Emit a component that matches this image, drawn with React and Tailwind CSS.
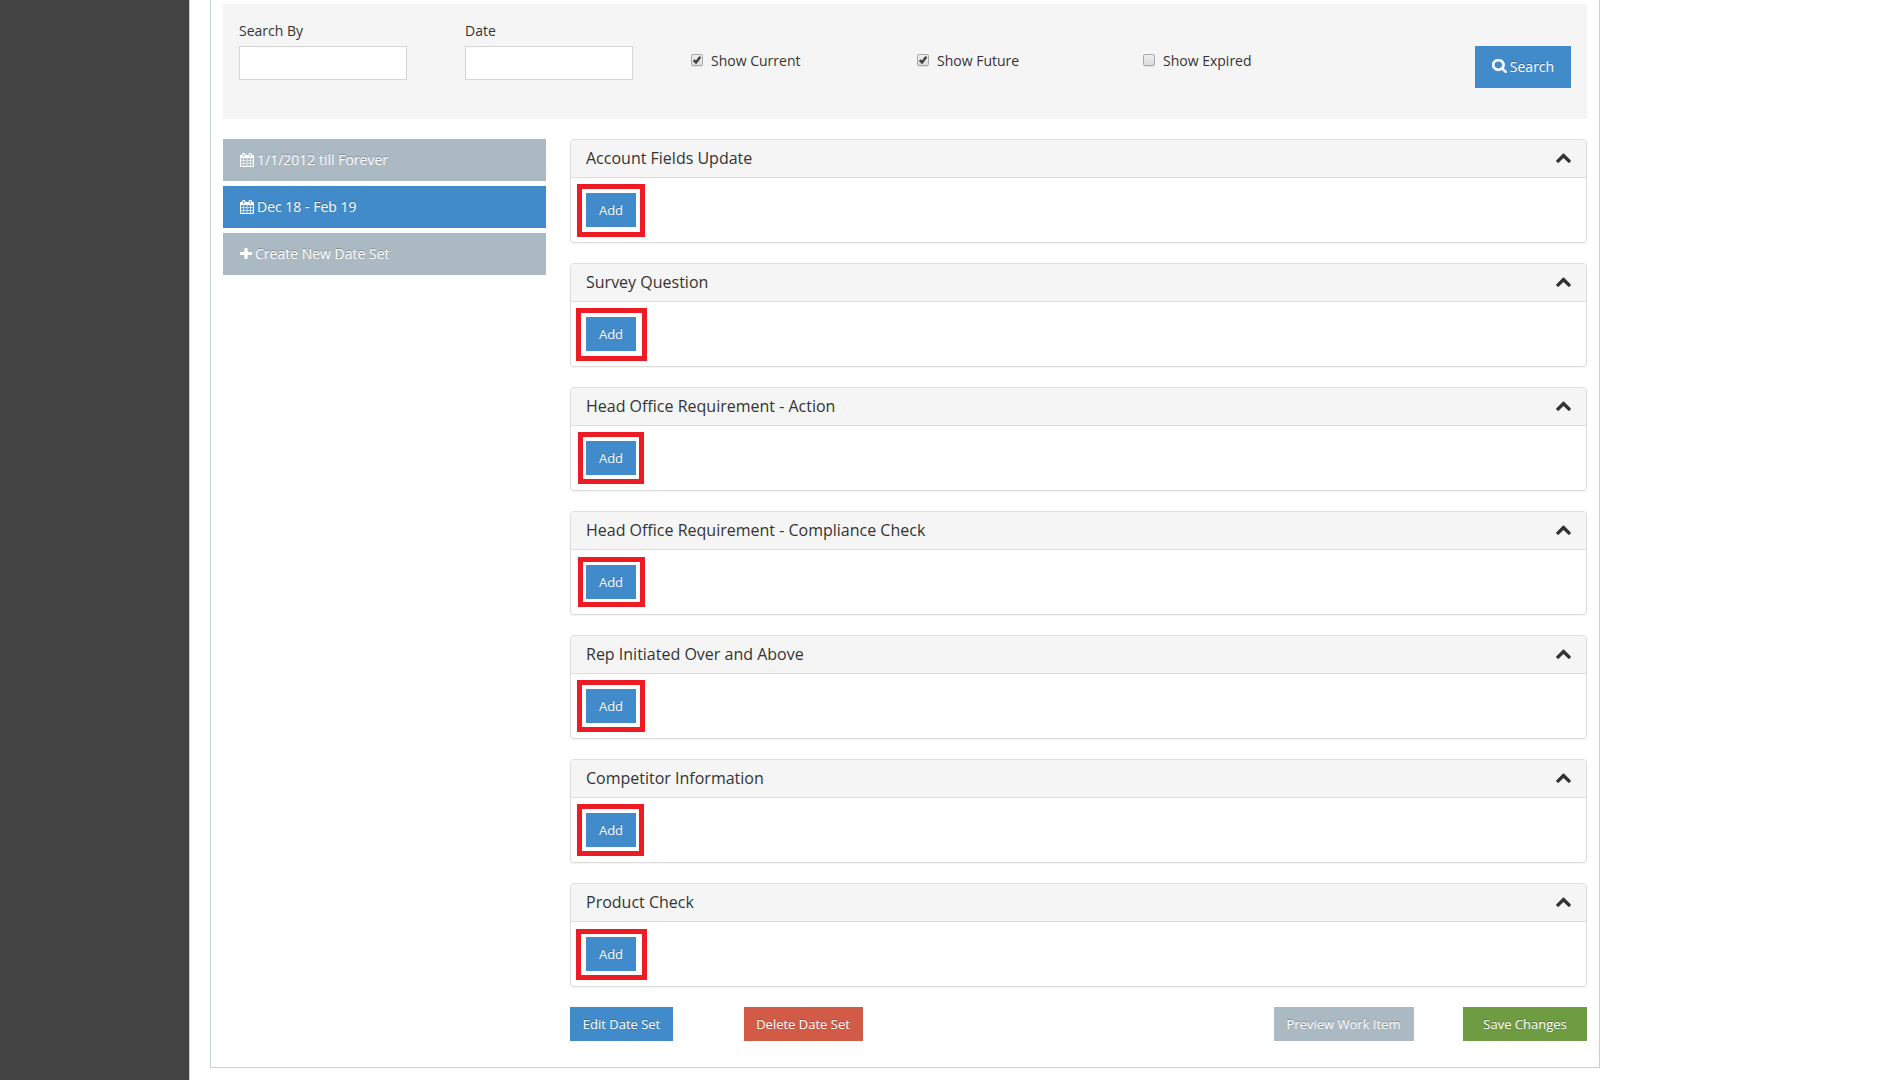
import { useState } from 'react';
import clsx from 'clsx';

const ICONS = {
  calendar: {
    viewBox: '64 0 1664 1792',
    d: 'M192 1664h288v-288h-288v288zm352 0h320v-288h-320v288zm-352-352h288v-320h-288v320zm352 0h320v-320h-320v320zm-352-384h288v-288h-288v288zm736 736h320v-288h-320v288zm-384-736h320v-288h-320v288zm768 736h288v-288h-288v288zm-384-352h320v-320h-320v320zm-352-864v-288q0-13-9.5-22.5t-22.5-9.5h-64q-13 0-22.5 9.5t-9.5 22.5v288q0 13 9.5 22.5t22.5 9.5h64q13 0 22.5-9.5t9.5-22.5zm736 864h288v-320h-288v320zm-384-384h320v-288h-320v288zm384 0h288v-288h-288v288zm32-480v-288q0-13-9.5-22.5t-22.5-9.5h-64q-13 0-22.5 9.5t-9.5 22.5v288q0 13 9.5 22.5t22.5 9.5h64q13 0 22.5-9.5t9.5-22.5zm384-64v1280q0 52-38 90t-90 38h-1408q-52 0-90-38t-38-90v-1280q0-52 38-90t90-38h128v-96q0-66 47-113t113-47h64q66 0 113 47t47 113v96h384v-96q0-66 47-113t113-47h64q66 0 113 47t47 113v96h128q52 0 90 38t38 90z',
  },
  plus: {
    viewBox: '192 128 1408 1408',
    d: 'M1600 736v192q0 40-28 68t-68 28h-416v416q0 40-28 68t-68 28h-192q-40 0-68-28t-28-68v-416h-416q-40 0-68-28t-28-68v-192q0-40 28-68t68-28h416v-416q0-40 28-68t68-28h192q40 0 68 28t28 68v416h416q40 0 68 28t28 68z',
  },
  search: {
    viewBox: '64 128 1664 1664',
    d: 'M1216 832q0-185-131.5-316.5t-316.5-131.5-316.5 131.5-131.5 316.5 131.5 316.5 316.5 131.5 316.5-131.5 131.5-316.5zm512 832q0 52-38 90t-90 38q-54 0-90-38l-343-342q-179 124-399 124-143 0-273.5-55.5t-225-150-150-225-55.5-273.5 55.5-273.5 150-225 225-150 273.5-55.5 273.5 55.5 225 150 150 225 55.5 273.5q0 220-124 399l343 343q37 37 37 90z',
  },
  chevron: {
    viewBox: '90 435 1612 1080',
    d: 'M1683 1331l-166 165q-19 19-45 19t-45-19l-531-531-531 531q-19 19-45 19t-45-19l-166-165q-19-19-19-45.5t19-45.5l742-741q19-19 45-19t45 19l742 741q19 19 19 45.5t-19 45.5z',
  },
};

const DATE_SETS = [
  { label: '1/1/2012 till Forever', icon: 'calendar' },
  { label: 'Dec 18 - Feb 19', icon: 'calendar' },
  { label: 'Create New Date Set', icon: 'plus' },
];

const SECTIONS = [
  { title: 'Account Fields Update', mark: '-left-[9px] -top-[9px] w-[68px] h-[53px]' },
  { title: 'Survey Question', mark: '-left-[10px] -top-[9px] w-[71px] h-[53px]' },
  { title: 'Head Office Requirement - Action', mark: '-left-[8px] -top-[9px] w-[66px] h-[52px]' },
  { title: 'Head Office Requirement - Compliance Check', mark: '-left-[8px] -top-[8px] w-[67px] h-[50px]' },
  { title: 'Rep Initiated Over and Above', mark: '-left-[9px] -top-[9px] w-[68px] h-[52px]' },
  { title: 'Competitor Information', mark: '-left-[9px] -top-[9px] w-[67px] h-[52px]' },
  { title: 'Product Check', mark: '-left-[10px] -top-[8px] w-[71px] h-[51px]' },
];

function Icon({ name, className }) {
  return (
    <svg
      viewBox={ICONS[name].viewBox}
      preserveAspectRatio="none"
      fill="currentColor"
      className={clsx('shrink-0', className)}
    >
      <path d={ICONS[name].d} />
    </svg>
  );
}

function Button({ className, children, onClick }) {
  return (
    <button
      onClick={onClick}
      className={clsx(
        'flex items-center justify-center text-white whitespace-nowrap [text-shadow:0_-1px_0_rgba(0,0,0,0.25)]',
        className
      )}
    >
      {children}
    </button>
  );
}

function TextField({ label }) {
  return (
    <label className="flex flex-col w-[226px] pt-[17px]">
      <span className="h-[25px] leading-5">{label}</span>
      <input className="w-[168px] h-[34px] px-2 bg-white border border-[#d5d5d5] outline-none" />
    </label>
  );
}

function CheckField({ label, initial = false }) {
  const [checked, setChecked] = useState(initial);

  return (
    <label className="flex items-center w-[226px] h-5 mt-[47px]">
      <input
        type="checkbox"
        className="sr-only"
        checked={checked}
        onChange={() => setChecked(!checked)}
      />
      <span className="flex items-center justify-center w-3 h-3 mb-0.5 mr-2 rounded-[2px] border border-[#a9a9a9] bg-linear-to-b from-[#eeeeee] to-[#dcdcdc] shadow-[0_1px_0_rgba(0,0,0,0.08)]">
        {checked && (
          <svg viewBox="0 0 10 10" className="w-2.5 h-2.5" fill="none" stroke="#404040" strokeWidth="2.4">
            <path d="M1.7 5.2L4 7.4L8.3 1.8" />
          </svg>
        )}
      </span>
      {label}
    </label>
  );
}

function Section({ title, mark }) {
  return (
    <section className="h-[104px] rounded border border-[#dddddd] bg-white shadow-[0_1px_1px_rgba(0,0,0,0.05)]">
      <header className="flex items-center justify-between h-[38px] px-[15px] pb-px rounded-t-[3px] border-b border-[#dddddd] bg-[#f5f5f5] text-base leading-[22px]">
        <h3>{title}</h3>
        <Icon name="chevron" className="w-[15px] h-2.5" />
      </header>
      <div className="flex p-[15px]">
        <div className="relative">
          <Button className="w-[50px] h-[34px] bg-[#428bca] text-[13px]">Add</Button>
          <span className={clsx('absolute border-[5px] border-[#ed1c24] pointer-events-none', mark)} />
        </div>
      </div>
    </section>
  );
}

export default function App() {
  const [active, setActive] = useState(1);

  return (
    <div className="flex h-[1080px] overflow-hidden bg-white text-[#333333] text-sm font-['Open_Sans',sans-serif]">
      <aside className="w-[190px] shrink-0 bg-[#434343] border-r border-[#cccccc]" />

      <main className="w-[1390px] h-[1068px] ml-5 px-3 pt-1 border-x border-b border-[#c5d0dc]">
        {/* Filters */}
        <div className="flex h-[115px] w-[1364px] px-4 bg-[#f5f5f5]">
          <TextField label="Search By" />
          <TextField label="Date" />
          <CheckField label="Show Current" initial />
          <CheckField label="Show Future" initial />
          <CheckField label="Show Expired" />
          <Button className="w-24 h-[42px] mt-[42px] ml-auto gap-[3px] bg-[#428bca]">
            <Icon name="search" className="w-[15px] h-[14px] -mt-0.5 stroke-current stroke-[50]" />
            Search
          </Button>
        </div>

        <div className="flex gap-6 mt-5">
          <nav className="flex flex-col gap-[5px] w-[323px]">
            {DATE_SETS.map(({ label, icon }, i) => (
              <Button
                key={label}
                onClick={() => setActive(i)}
                className={clsx(
                  'h-[42px] pl-[17px] justify-start! gap-[3px]',
                  active === i ? 'bg-[#428bca]' : 'bg-[#abb9c3]'
                )}
              >
                <Icon
                  name={icon}
                  className={icon === 'plus' ? 'w-3 h-[11px] -mt-px' : 'w-[14px] h-[14px] stroke-current stroke-[15]'}
                />
                {label}
              </Button>
            ))}
          </nav>

          <div className="flex flex-col gap-5 w-[1017px]">
            {SECTIONS.map((section) => (
              <Section key={section.title} {...section} />
            ))}

            <div className="flex h-[34px] text-[13px]">
              <Button className="w-[103px] bg-[#428bca]">Edit Date Set</Button>
              <Button className="w-[119px] ml-[71px] pr-px bg-[#d15b47]">Delete Date Set</Button>
              <Button className="w-[140px] ml-auto pr-px bg-[#abb9c3]">Preview Work Item</Button>
              <Button className="w-[124px] ml-[49px] bg-[#6f9c43]">Save Changes</Button>
            </div>
          </div>
        </div>
      </main>
    </div>
  );
}
